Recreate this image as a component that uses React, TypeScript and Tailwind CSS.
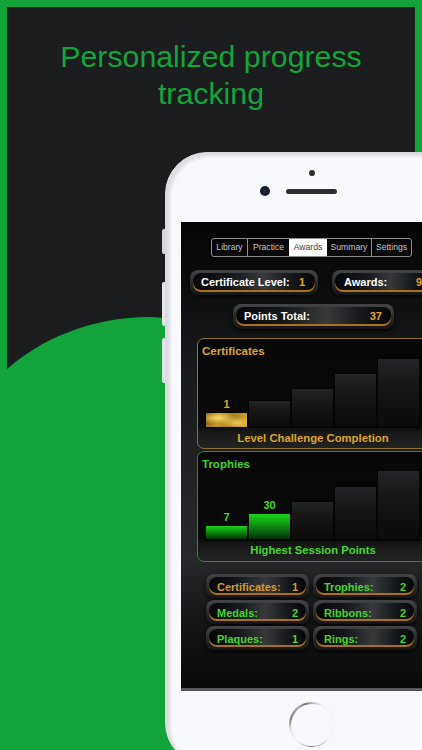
const SANS = "font-['Liberation_Sans',Arial,sans-serif]";

function Pill({
  label,
  value,
  labelColor = "text-white",
  valueColor = "text-[#e2a52a]",
  outer,
  px = "pl-[8px] pr-[10px]",
}: {
  label: string;
  value: string;
  labelColor?: string;
  valueColor?: string;
  outer: string;
  px?: string;
}) {
  return (
    <div
      className={`${outer} rounded-[8px] bg-[linear-gradient(180deg,#434445_0%,#2a2a2b_55%,#141414_100%)] p-[3px] shadow-[0_2px_4px_rgba(0,0,0,0.8)]`}
    >
      <div
        className={`flex h-full items-center justify-between rounded-[8px] bg-[linear-gradient(90deg,#050607_0%,#14171a_30%,#37393a_58%,#14171a_82%,#040506_100%)] shadow-[inset_0_-2px_0_#a8721c] ${px} pb-[1px] text-[11px] font-bold leading-none`}
      >
        <span className={labelColor}>{label}</span>
        <span className={valueColor}>{value}</span>
      </div>
    </div>
  );
}

function Bar({
  h,
  label,
  fill,
  labelColor,
}: {
  h: number;
  label?: string;
  fill?: string;
  labelColor?: string;
}) {
  return (
    <div className="flex w-[43px] flex-col items-center justify-end">
      {label && (
        <span className={`mb-[2px] text-[11px] font-bold leading-[11px] ${labelColor}`}>{label}</span>
      )}
      <div
        className={`w-full border-l border-r border-t border-[#050505] ${
          fill ?? "bg-[linear-gradient(180deg,#232425_0%,#161617_40%,#0b0b0c_100%)]"
        }`}
        style={{ height: h }}
      />
    </div>
  );
}

function Panel({
  title,
  caption,
  border,
  color,
  bars,
  marginTop,
  captionPad,
}: {
  title: string;
  caption: string;
  border: string;
  color: string;
  bars: React.ReactNode;
  marginTop: string;
  captionPad: string;
}) {
  return (
    <div
      className={`ml-[16px] ${marginTop} flex h-[111px] w-[232px] shrink-0 flex-col rounded-[7px] border ${border} bg-[linear-gradient(180deg,#070708_0%,#0a0a0b_78%,#1a1a1b_88%,#222223_100%)]`}
    >
      <div className={`pl-[4px] pt-[5px] text-[11.5px] font-bold leading-[14px] ${color}`}>{title}</div>
      <div className="flex min-h-0 flex-1 items-end pl-[7px]">{bars}</div>
      <div className={`${captionPad} text-center text-[11.3px] font-bold leading-[14px] ${color}`}>
        {caption}
      </div>
    </div>
  );
}

export default function App() {
  const gold =
    "bg-[radial-gradient(ellipse_at_30%_35%,#f7d765_0%,transparent_45%),radial-gradient(ellipse_at_75%_70%,#efc850_0%,transparent_40%),linear-gradient(100deg,#8a6414_0%,#c79a2a_30%,#a27a1c_60%,#d2a936_100%)]";
  const green = "bg-[linear-gradient(180deg,#19d31d_0%,#12a815_30%,#075d0a_75%,#04300a_100%)]";
  const smallPx = "pl-[8px] pr-[8px] pt-[3px]";
  const g = "text-[#45d52f]";

  return (
    <div className={`relative h-[750px] w-[422px] overflow-hidden bg-[#12a33b] ${SANS}`}>
      {/* dark panel with curved bottom edge */}
      <svg className="absolute left-0 top-0" width="422" height="750" viewBox="0 0 422 750">
        <path d="M7 7H415V420H300C240 350 190 317 150 317C90 317 40 340 7 369Z" fill="#1b1c1e" />
      </svg>

      <h1 className="absolute left-[7px] top-[38px] w-[408px] text-center text-[30.3px] font-normal leading-[37px] text-[#12a53c]">
        Personalized progress
        <br />
        tracking
      </h1>

      {/* side buttons */}
      <div className="absolute left-[162px] top-[229px] h-[25px] w-[4px] rounded-l-[2px] bg-[#d5d6d9]" />
      <div className="absolute left-[162px] top-[282px] h-[44px] w-[4px] rounded-l-[2px] bg-[#e4e5e8]" />
      <div className="absolute left-[162px] top-[338px] h-[45px] w-[4px] rounded-l-[2px] bg-[#e4e5e8]" />

      {/* phone */}
      <div className="absolute left-[165px] top-[152px] h-[613px] w-[300px] rounded-[42px] border-[1px] border-[#d9dade] bg-[#f8f9fc] shadow-[inset_4px_3px_3px_#dcdde1]">
        <div className="absolute left-[143px] top-[17px] h-[6px] w-[6px] rounded-full bg-[#2b2b2d]" />
        <div className="absolute left-[94px] top-[33px] h-[10px] w-[10px] rounded-full bg-[radial-gradient(circle,#1b2a4a_0%,#141a2a_50%,#2c2d30_100%)]" />
        <div className="absolute left-[120px] top-[36px] h-[5px] w-[51px] rounded-full bg-[#2d2e30]" />

        {/* screen */}
        <div className="absolute left-[15px] top-[69px] flex h-[469px] w-[264px] flex-col overflow-hidden border-b-[3px] border-b-[#55565a] bg-[linear-gradient(180deg,#040404_0%,#18191a_30%,#27282a_72%,#161617_85%,#0a0a0b_100%)]">
          {/* tabs */}
          <div className="ml-[30px] mt-[16px] flex h-[19px] w-[201px] shrink-0 overflow-hidden rounded-[3px] border border-[#8e8e90] text-[8.6px] leading-none text-[#c4c4c6]">
            <div className="flex w-[36px] items-center justify-center border-r border-[#8e8e90]">Library</div>
            <div className="flex w-[41px] items-center justify-center">Practice</div>
            <div className="flex w-[38px] items-center justify-center bg-white text-[#3a3a3a]">Awards</div>
            <div className="flex w-[45px] items-center justify-center border-r border-[#8e8e90]">Summary</div>
            <div className="flex flex-1 items-center justify-center">Settings</div>
          </div>

          {/* top counters */}
          <div className="ml-[9px] mt-[13px] flex shrink-0 gap-[14px]">
            <Pill label="Certificate Level:" value="1" outer="h-[25px] w-[128px] shrink-0" />
            <Pill label="Awards:" value="9" outer="h-[25px] w-[102px] shrink-0" px="pl-[9px] pr-[9px]" />
          </div>
          <div className="ml-[52px] mt-[9px] shrink-0">
            <Pill label="Points Total:" value="37" outer="h-[25px] w-[161px]" px="pl-[8px] pr-[9px]" />
          </div>

          <Panel
            title="Certificates"
            caption="Level Challenge Completion"
            border="border-[#8d7333]"
            color="text-[#dba52c]"
            marginTop="mt-[9px]"
            captionPad="pt-[3px] pb-[3px]"
            bars={
              <div className="flex items-end border-b border-[#050505]">
                <Bar h={15} label="1" labelColor="text-[#dba52c]" fill={gold} />
                <Bar h={27} />
                <Bar h={39} />
                <Bar h={54} />
                <Bar h={69} />
              </div>
            }
          />
          <Panel
            title="Trophies"
            caption="Highest Session Points"
            border="border-[#2c8a2a]"
            color={g}
            marginTop="mt-[2px]"
            captionPad="pt-[2px] pb-[4px]"
            bars={
              <div className="flex items-end border-b-[2px] border-[#050505]">
                <Bar h={14} label="7" labelColor={g} fill={green} />
                <Bar h={26} label="30" labelColor={g} fill={green} />
                <Bar h={38} />
                <Bar h={53} />
                <Bar h={69} />
              </div>
            }
          />

          {/* small counters */}
          <div className="ml-[25px] mt-[12px] grid w-[211px] shrink-0 grid-cols-[103px_104px] gap-x-[4px] gap-y-[2px]">
            <Pill label="Certificates:" value="1" outer="h-[24px]" labelColor="text-[#d99a28]" valueColor="text-[#d99a28]" px={smallPx} />
            <Pill label="Trophies:" value="2" outer="h-[24px]" labelColor={g} valueColor={g} px={smallPx} />
            <Pill label="Medals:" value="2" outer="h-[24px]" labelColor={g} valueColor={g} px={smallPx} />
            <Pill label="Ribbons:" value="2" outer="h-[24px]" labelColor={g} valueColor={g} px={smallPx} />
            <Pill label="Plaques:" value="1" outer="h-[24px]" labelColor={g} valueColor={g} px={smallPx} />
            <Pill label="Rings:" value="2" outer="h-[24px]" labelColor={g} valueColor={g} px={smallPx} />
          </div>
        </div>

        {/* home button */}
        <div className="absolute left-[123px] top-[549px] flex h-[45px] w-[45px] items-center justify-center rounded-full bg-[conic-gradient(#b8b8ba_0deg,#f2f2f4_30deg,#f4f4f6_130deg,#77787a_180deg,#f0f0f2_215deg,#e8e8ea_255deg,#77787a_285deg,#a8a8aa_320deg,#77787a_345deg,#b8b8ba_360deg)]">
          <div className="h-[42px] w-[42px] rounded-full bg-[#f8f9fc]" />
        </div>
      </div>
    </div>
  );
}
